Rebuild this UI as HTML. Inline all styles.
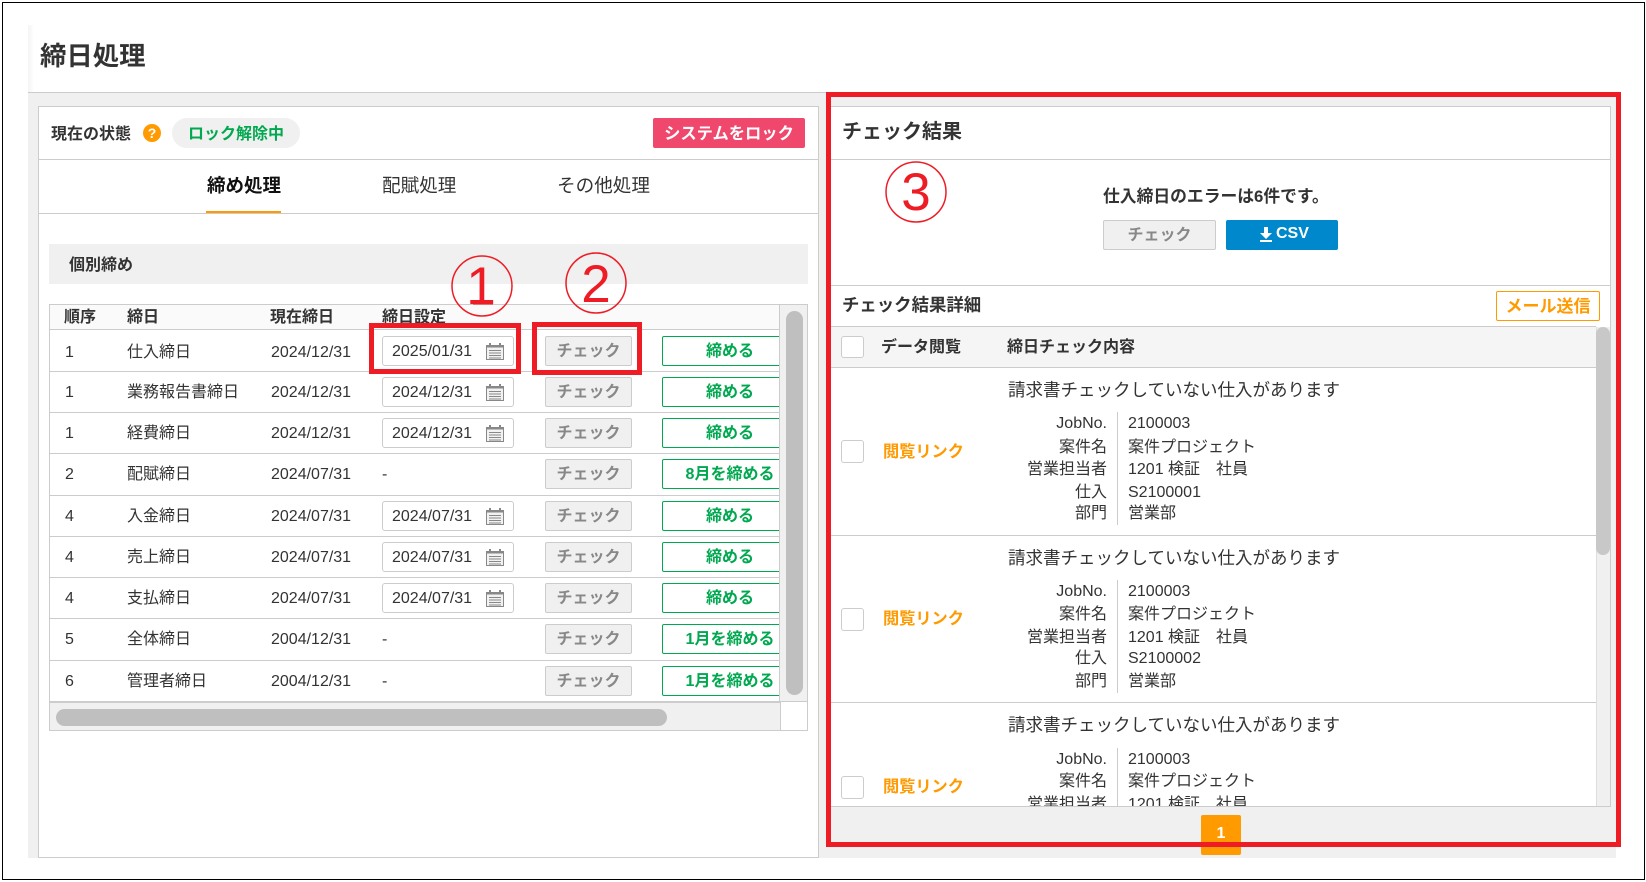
<!DOCTYPE html>
<html lang="ja"><head><meta charset="utf-8"><title>締日処理</title>
<style>
html,body{margin:0;padding:0;background:#fff}
body{width:1646px;height:882px;overflow:hidden;position:relative;font-family:"Liberation Sans","Noto Sans CJK JP",sans-serif;color:#333;font-size:16px}
.a{position:absolute;box-sizing:border-box}
.t{position:absolute;white-space:nowrap;line-height:20px;height:20px}
.b{font-weight:700}
.hl{position:absolute;height:1px;background:#ccc}
.d{position:absolute;left:382px;width:132px;height:30px;border:1px solid #ccc;border-radius:3px;background:#fff;box-sizing:border-box}
.d span{position:absolute;left:9px;top:5px;line-height:20px}
.d svg{position:absolute;left:103px;top:6px}
.c{position:absolute;left:545px;width:87px;height:30px;border:1px solid #ccc;border-radius:2px;background:#f0f0f0;box-sizing:border-box;color:#888;font-weight:700;text-align:center;line-height:29px}
.g{position:absolute;left:662px;width:136px;height:30px;border:1px solid #00a84f;border-radius:2px;background:#fff;box-sizing:border-box;color:#00a84f;font-weight:700;text-align:center;line-height:29px}
.r{text-align:right;width:130px;left:977px}
.v{left:1128px}
.cb{position:absolute;left:841px;width:23px;height:23px;border:1px solid #ccc;border-radius:3px;background:#fff;box-sizing:border-box}
.o{color:#ff9a00;font-weight:700}
.red{position:absolute;box-sizing:border-box;border:solid #ee1c25}
</style></head><body>
<!-- page -->
<div class="a" style="left:28px;top:25px;width:6px;height:67px;background:linear-gradient(90deg,#f4f4f4,#fff)"></div>
<div class="a" style="left:28px;top:92px;width:1588px;height:766px;background:#f0f0f0;border-top:1px solid #ccc"></div>
<div class="t b" style="left:40px;top:41px;font-size:26.4px;line-height:30px;height:30px">締日処理</div>

<!-- left panel -->
<div class="a" style="left:38px;top:106px;width:781px;height:752px;background:#fff;border:1px solid #ccc"></div>
<div class="t b" style="left:51px;top:125px">現在の状態</div>
<div class="a" style="left:143px;top:124px;width:18px;height:18px;border-radius:50%;background:#ff9a00;color:#fff;font-weight:700;font-size:14px;line-height:18px;text-align:center">?</div>
<div class="a" style="left:172px;top:118px;width:128px;height:30px;border-radius:15px;background:#f0f0f0"></div>
<div class="t b" style="left:188px;top:125px;color:#00a84f">ロック解除中</div>
<div class="a" style="left:653px;top:118px;width:152px;height:30px;border-radius:2px;background:#f0476c;color:#fff;font-weight:700;text-align:center;line-height:32px;font-size:16.3px">システムをロック</div>
<div class="hl" style="left:39px;top:159px;width:779px"></div>
<div class="hl" style="left:39px;top:213px;width:779px"></div>
<div class="t b" style="left:207px;top:176px;font-size:18.5px;color:#111">締め処理</div>
<div class="a" style="left:206px;top:211px;width:75px;height:2px;background:#ff9a00"></div>
<div class="t" style="left:382px;top:176px;font-size:18.6px">配賦処理</div>
<div class="t" style="left:557px;top:176px;font-size:18.6px">その他処理</div>
<div class="a" style="left:49px;top:244px;width:759px;height:40px;background:#f0f0f0"></div>
<div class="t b" style="left:69px;top:256px">個別締め</div>

<!-- left table -->
<div class="a" style="left:49px;top:304px;width:759px;height:427px;border:1px solid #ccc;background:#fff"></div>
<div class="a" style="left:50px;top:305px;width:729px;height:24px;background:#fafafa"></div>
<div class="hl" style="left:50px;top:329px;width:729px"></div>
<div class="hl" style="left:50px;top:371px;width:729px"></div>
<div class="hl" style="left:50px;top:412px;width:729px"></div>
<div class="hl" style="left:50px;top:453px;width:729px"></div>
<div class="hl" style="left:50px;top:495px;width:729px"></div>
<div class="hl" style="left:50px;top:536px;width:729px"></div>
<div class="hl" style="left:50px;top:577px;width:729px"></div>
<div class="hl" style="left:50px;top:618px;width:729px"></div>
<div class="hl" style="left:50px;top:660px;width:729px"></div>
<div class="t b" style="left:64px;top:308px">順序</div>
<div class="t b" style="left:127px;top:308px">締日</div>
<div class="t b" style="left:270px;top:308px">現在締日</div>
<div class="t b" style="left:382px;top:308px">締日設定</div>

<div class="t" style="left:65px;top:343px">1</div><div class="t" style="left:127px;top:343px">仕入締日</div><div class="t" style="left:271px;top:343px">2024/12/31</div>
<div class="t" style="left:65px;top:383px">1</div><div class="t" style="left:127px;top:383px">業務報告書締日</div><div class="t" style="left:271px;top:383px">2024/12/31</div>
<div class="t" style="left:65px;top:424px">1</div><div class="t" style="left:127px;top:424px">経費締日</div><div class="t" style="left:271px;top:424px">2024/12/31</div>
<div class="t" style="left:65px;top:465px">2</div><div class="t" style="left:127px;top:465px">配賦締日</div><div class="t" style="left:271px;top:465px">2024/07/31</div><div class="t" style="left:382px;top:465px">-</div>
<div class="t" style="left:65px;top:507px">4</div><div class="t" style="left:127px;top:507px">入金締日</div><div class="t" style="left:271px;top:507px">2024/07/31</div>
<div class="t" style="left:65px;top:548px">4</div><div class="t" style="left:127px;top:548px">売上締日</div><div class="t" style="left:271px;top:548px">2024/07/31</div>
<div class="t" style="left:65px;top:589px">4</div><div class="t" style="left:127px;top:589px">支払締日</div><div class="t" style="left:271px;top:589px">2024/07/31</div>
<div class="t" style="left:65px;top:630px">5</div><div class="t" style="left:127px;top:630px">全体締日</div><div class="t" style="left:271px;top:630px">2004/12/31</div><div class="t" style="left:382px;top:630px">-</div>
<div class="t" style="left:65px;top:672px">6</div><div class="t" style="left:127px;top:672px">管理者締日</div><div class="t" style="left:271px;top:672px">2004/12/31</div><div class="t" style="left:382px;top:672px">-</div>

<svg width="0" height="0" style="position:absolute"><defs><g id="cal" fill="none" stroke="#888"><rect x="0.5" y="2.5" width="17" height="14" fill="#f2f2f2" stroke="#888"/><rect x="0" y="2" width="18" height="2.5" fill="#888" stroke="none"/><rect x="3" y="0" width="2" height="4" fill="#888" stroke="none"/><rect x="13" y="0" width="2" height="4" fill="#888" stroke="none"/><path d="M3 7.5h12M3 10h12M3 12.5h12M3 15h12"/></g></defs></svg>

<div class="d" style="top:336px"><span>2025/01/31</span><svg width="18" height="17"><use href="#cal"/></svg></div>
<div class="d" style="top:377px"><span>2024/12/31</span><svg width="18" height="17"><use href="#cal"/></svg></div>
<div class="d" style="top:418px"><span>2024/12/31</span><svg width="18" height="17"><use href="#cal"/></svg></div>
<div class="d" style="top:501px"><span>2024/07/31</span><svg width="18" height="17"><use href="#cal"/></svg></div>
<div class="d" style="top:542px"><span>2024/07/31</span><svg width="18" height="17"><use href="#cal"/></svg></div>
<div class="d" style="top:583px"><span>2024/07/31</span><svg width="18" height="17"><use href="#cal"/></svg></div>

<div class="c" style="top:336px">チェック</div><div class="c" style="top:377px">チェック</div><div class="c" style="top:418px">チェック</div><div class="c" style="top:459px">チェック</div><div class="c" style="top:501px">チェック</div><div class="c" style="top:542px">チェック</div><div class="c" style="top:583px">チェック</div><div class="c" style="top:624px">チェック</div><div class="c" style="top:666px">チェック</div>

<div class="g" style="top:336px">締める</div><div class="g" style="top:377px">締める</div><div class="g" style="top:418px">締める</div><div class="g" style="top:459px">8月を締める</div><div class="g" style="top:501px">締める</div><div class="g" style="top:542px">締める</div><div class="g" style="top:583px">締める</div><div class="g" style="top:624px">1月を締める</div><div class="g" style="top:666px">1月を締める</div>

<!-- left scrollbars -->
<div class="a" style="left:779px;top:305px;width:28px;height:396px;background:#f0f0f0;border-left:1px solid #ccc"></div>
<div class="a" style="left:786px;top:311px;width:17px;height:384px;border-radius:9px;background:#bfbfbf"></div>
<div class="a" style="left:50px;top:701px;width:731px;height:29px;background:#f0f0f0;border-top:2px solid #ccc;border-right:1px solid #ccc"></div>
<div class="a" style="left:56px;top:709px;width:611px;height:17px;border-radius:9px;background:#bfbfbf"></div>
<div class="hl" style="left:781px;top:701px;width:26px"></div>

<!-- right panel -->
<div class="a" style="left:830px;top:106px;width:781px;height:701px;background:#fff;border:1px solid #ccc"></div>
<div class="t b" style="left:842px;top:122px;font-size:20px">チェック結果</div>
<div class="hl" style="left:831px;top:159px;width:779px"></div>
<div class="t b" style="left:1103px;top:187px;font-size:16.8px">仕入締日のエラーは6件です。</div>
<div class="a" style="left:1103px;top:220px;width:113px;height:30px;border:1px solid #ccc;border-radius:2px;background:#f0f0f0;color:#888;font-weight:700;text-align:center;line-height:29px">チェック</div>
<div class="a" style="left:1226px;top:220px;width:112px;height:30px;border-radius:2px;background:#0088cc"></div>
<svg class="a" style="left:1259px;top:227px" width="14" height="15" viewBox="0 0 14 15"><path d="M5 0h4v6h4L7 12 1 6h4zM1 13h12v2H1z" fill="#fff"/></svg>
<div class="t b" style="left:1276px;top:224px;color:#fff">CSV</div>
<div class="hl" style="left:831px;top:285px;width:779px"></div>
<div class="t b" style="left:842px;top:295px;font-size:17.4px">チェック結果詳細</div>
<div class="a" style="left:1496px;top:291px;width:104px;height:30px;border:1px solid #ff9a00;border-radius:2px;background:#fff;color:#ff9a00;font-weight:700;text-align:center;line-height:29px;font-size:17px">メール送信</div>
<div class="a" style="left:831px;top:326px;width:765px;height:42px;background:#f5f5f5;border-top:1px solid #ccc;border-bottom:1px solid #ccc"></div>
<div class="cb" style="top:336px;height:22px"></div>
<div class="t b" style="left:881px;top:338px">データ閲覧</div>
<div class="t b" style="left:1007px;top:338px">締日チェック内容</div>

<!-- right list -->
<div class="a" style="left:831px;top:368px;width:765px;height:438px;overflow:hidden">
  <div class="a" style="left:-831px;top:-368px;width:1600px;height:860px">
    <div class="t" style="left:1008px;top:380px;font-size:17.5px">請求書チェックしていない仕入があります</div>
    <div class="a" style="left:1117px;top:412px;width:1px;height:113px;background:#ccc"></div>
    <div class="t r" style="top:414px">JobNo.</div><div class="t v" style="top:414px">2100003</div>
    <div class="t r" style="top:438px">案件名</div><div class="t v" style="top:438px">案件プロジェクト</div>
    <div class="t r" style="top:460px">営業担当者</div><div class="t v" style="top:460px">1201 検証　社員</div>
    <div class="t r" style="top:483px">仕入</div><div class="t v" style="top:483px">S2100001</div>
    <div class="t r" style="top:504px">部門</div><div class="t v" style="top:504px">営業部</div>
    <div class="cb" style="top:440px"></div>
    <div class="t o" style="left:883px;top:442px;font-size:16.2px">閲覧リンク</div>
    <div class="hl" style="left:831px;top:535px;width:765px"></div>

    <div class="t" style="left:1008px;top:548px;font-size:17.5px">請求書チェックしていない仕入があります</div>
    <div class="a" style="left:1117px;top:580px;width:1px;height:113px;background:#ccc"></div>
    <div class="t r" style="top:582px">JobNo.</div><div class="t v" style="top:582px">2100003</div>
    <div class="t r" style="top:605px">案件名</div><div class="t v" style="top:605px">案件プロジェクト</div>
    <div class="t r" style="top:628px">営業担当者</div><div class="t v" style="top:628px">1201 検証　社員</div>
    <div class="t r" style="top:649px">仕入</div><div class="t v" style="top:649px">S2100002</div>
    <div class="t r" style="top:672px">部門</div><div class="t v" style="top:672px">営業部</div>
    <div class="cb" style="top:608px"></div>
    <div class="t o" style="left:883px;top:609px;font-size:16.2px">閲覧リンク</div>
    <div class="hl" style="left:831px;top:702px;width:765px"></div>

    <div class="t" style="left:1008px;top:715px;font-size:17.5px">請求書チェックしていない仕入があります</div>
    <div class="a" style="left:1117px;top:748px;width:1px;height:110px;background:#ccc"></div>
    <div class="t r" style="top:750px">JobNo.</div><div class="t v" style="top:750px">2100003</div>
    <div class="t r" style="top:772px">案件名</div><div class="t v" style="top:772px">案件プロジェクト</div>
    <div class="t r" style="top:795px">営業担当者</div><div class="t v" style="top:795px">1201 検証　社員</div>
    <div class="cb" style="top:776px"></div>
    <div class="t o" style="left:883px;top:777px;font-size:16.2px">閲覧リンク</div>
  </div>
</div>
<div class="a" style="left:1596px;top:327px;width:14px;height:479px;background:#f0f0f0;border-left:1px solid #ddd"></div>
<div class="a" style="left:1596px;top:327px;width:14px;height:228px;border-radius:7px;background:#c8c8c8"></div>

<!-- pager -->
<div class="a" style="left:1201px;top:815px;width:40px;height:40px;border-radius:2px;background:#ff9a00;color:#fff;font-weight:700;text-align:center;line-height:37px">1</div>

<!-- annotations -->
<div class="red" style="left:369px;top:323px;width:152px;height:51px;border-width:5px"></div>
<div class="red" style="left:532px;top:322px;width:110px;height:53px;border-width:5px"></div>
<div class="red" style="left:826px;top:92px;width:795px;height:755px;border-width:5px"></div>
<svg class="a" style="left:0;top:0" width="1646" height="882">
  <g fill="none" stroke="#ee1c25" stroke-width="1.5">
    <circle cx="482" cy="286" r="30"/><circle cx="596" cy="283" r="30"/><circle cx="916" cy="192" r="30"/>
    <path d="M473 303.500h20" stroke-width="2"/>
  </g>
  <g fill="#ee1c25" font-family="Liberation Sans, sans-serif" font-size="53" text-anchor="middle">
    <text x="481" y="304">1</text><text x="596" y="302">2</text><text x="916" y="210">3</text>
  </g>
</svg>

<!-- outer frame -->
<div class="a" style="left:2px;top:2px;width:1643px;height:878px;border:1px solid #000"></div>
</body></html>
